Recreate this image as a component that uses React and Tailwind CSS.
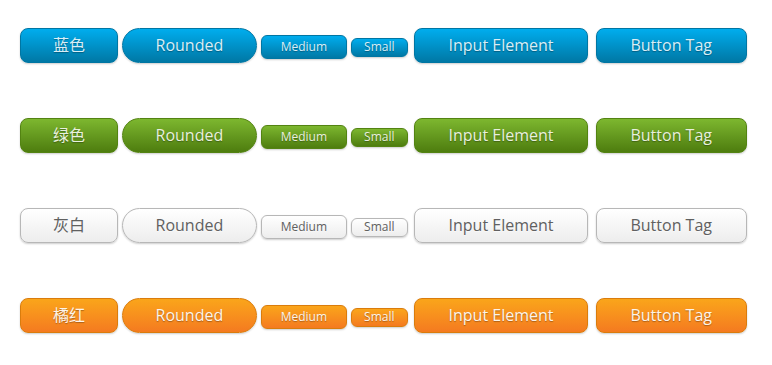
import React from "react";

const themes = {
  blue: {
    label: "蓝色",
    cls: "text-[#d9eef7] border-[#0076a3] bg-gradient-to-b from-[#00adee] to-[#0078a5] [text-shadow:0_1px_1px_rgba(0,0,0,0.3)]",
  },
  green: {
    label: "绿色",
    cls: "text-[#e8f0de] border-[#538312] bg-gradient-to-b from-[#7db72f] to-[#4e7d0e] [text-shadow:0_1px_1px_rgba(0,0,0,0.3)]",
  },
  white: {
    label: "灰白",
    cls: "text-[#606060] border-[#b7b7b7] bg-gradient-to-b from-[#ffffff] to-[#ededed] [text-shadow:0_1px_1px_rgba(255,255,255,0.6)]",
  },
  orange: {
    label: "橘红",
    cls: "text-[#fef4e9] border-[#da7c0c] bg-gradient-to-b from-[#faa51a] to-[#f47a20] [text-shadow:0_1px_1px_rgba(0,0,0,0.3)]",
  },
};

const base =
  "inline-block border shadow-[0_1px_2px_rgba(0,0,0,0.2)] whitespace-nowrap [font-family:'Open_Sans','Noto_Sans_CJK_SC',sans-serif]";
const regular = "text-[16px] leading-[16px] pt-[8px] pb-[9px]";

function Row({ t }) {
  const th = themes[t];
  return (
    <div className="flex items-baseline">
      <span className={`${base} ${th.cls} ${regular} px-[32px] rounded-[8px] mr-1`}>{th.label}</span>
      <span className={`${base} ${th.cls} ${regular} px-[32.5px] rounded-[32px] mr-1`}>Rounded</span>
      <span className={`${base} ${th.cls} text-[12px] leading-[12px] pt-[5px] pb-[5px] px-[19px] rounded-[6px] mr-1`}>
        Medium
      </span>
      <span className={`${base} ${th.cls} text-[12px] leading-[12px] pt-[2px] pb-[3px] px-[12px] rounded-[6px] mr-[6px]`}>
        Small
      </span>
      <span className={`${base} ${th.cls} ${regular} px-[34px] rounded-[8px] mr-2`}>Input Element</span>
      <span className={`${base} ${th.cls} ${regular} pl-[33px] pr-[34px] rounded-[8px]`}>Button Tag</span>
    </div>
  );
}

export default function App() {
  return (
    <div className="w-[772px] h-[365px] bg-white pt-[28px] pl-5 flex flex-col gap-[55px]">
      <Row t="blue" />
      <Row t="green" />
      <Row t="white" />
      <Row t="orange" />
    </div>
  );
}
